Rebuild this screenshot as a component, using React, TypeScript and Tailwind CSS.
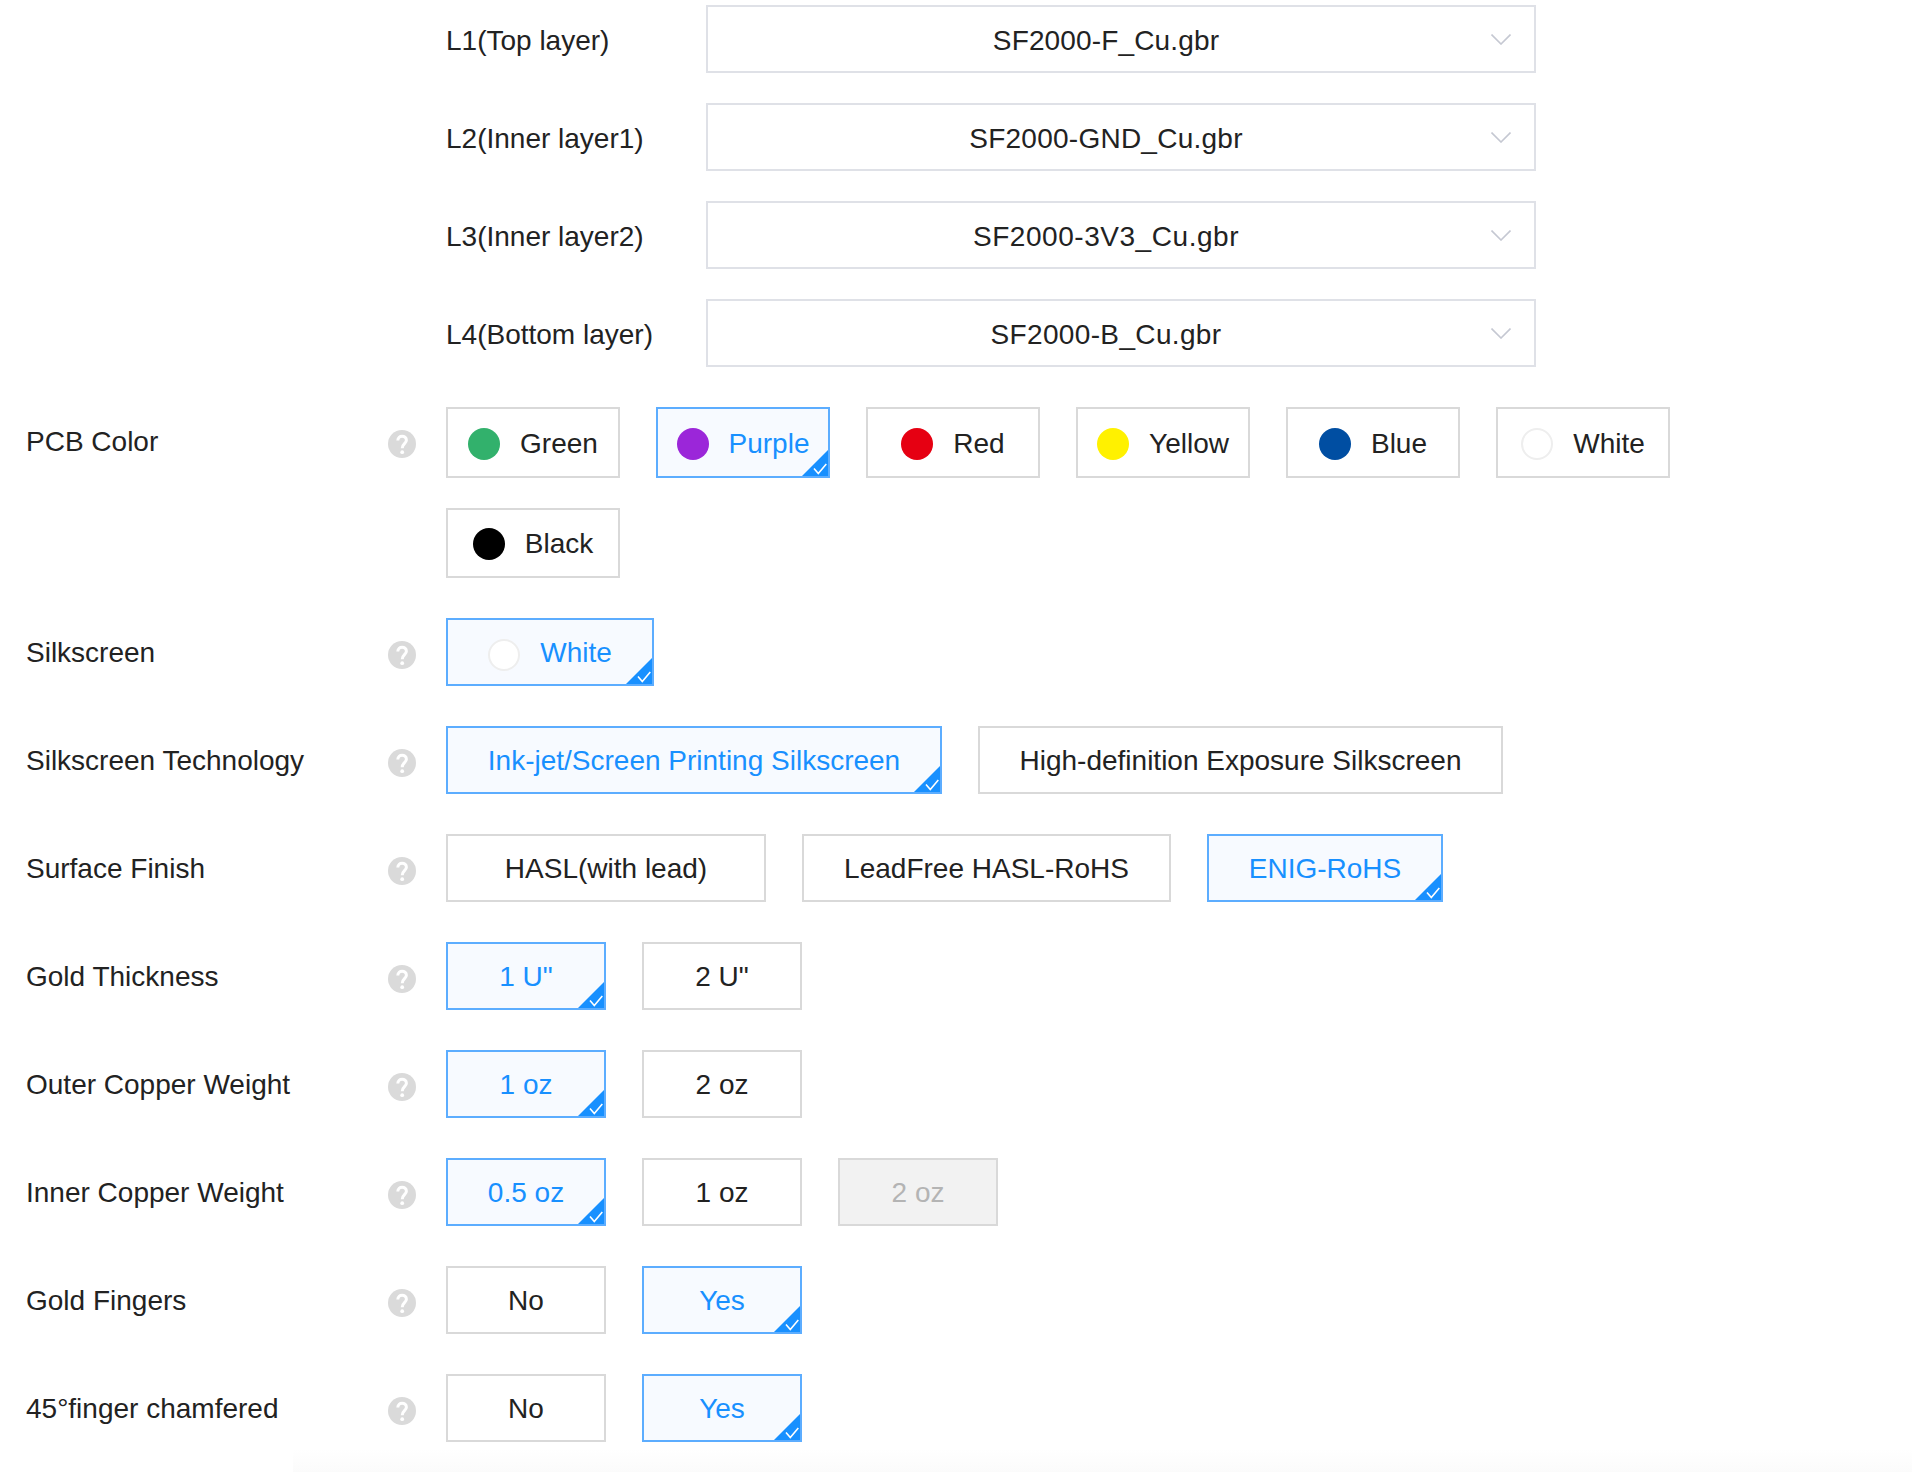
import React from "react";

const F = "font-['Liberation_Sans',Arial,sans-serif]";

function Help() {
  return (
    <svg width="28" height="28" viewBox="0 0 28 28" className="mt-[23px] shrink-0">
      <circle cx="14" cy="14" r="14" fill="#dadada" />
      <path d="M9.8 10.6 C9.8 4.6 18.4 5 18.4 10.2 C18.4 13.6 14.2 13.8 14.2 18.2" fill="none" stroke="#fff" strokeWidth="3" />
      <circle cx="14.2" cy="22.2" r="1.9" fill="#fff" />
    </svg>
  );
}

function Tick() {
  return (
    <svg width="26" height="26" viewBox="0 0 26 26" className="absolute right-0 bottom-0">
      <path d="M26 0 V26 H0 Z" fill="#1890ff" />
      <path d="M12 18.5 L16.3 23.6 L24.3 14" fill="none" stroke="#fff" strokeWidth="1.6" />
    </svg>
  );
}

function Dot({ color, ring, lift }: { color: string; ring?: boolean; lift?: boolean }) {
  return (
    <span
      className={`h-8 w-8 shrink-0 rounded-full ${ring ? "border-2 border-[#eeeeee]" : ""} ${lift ? "translate-y-[2px]" : ""}`}
      style={{ backgroundColor: color }}
    />
  );
}

type BtnProps = {
  w: string;
  h?: string;
  on?: boolean;
  off?: boolean;
  children: React.ReactNode;
};

function Btn({ w, h = "h-[68px]", on, off, children }: BtnProps) {
  const tone = on
    ? "border-[#5cadff] bg-[#f7faff] text-[#1890ff]"
    : off
      ? "border-[#d9d9d9] bg-[#f2f2f2] text-[#b4b4b4]"
      : "border-[#d9d9d9] bg-white text-[#222222]";
  return (
    <div className={`relative flex items-center justify-center border-2 pt-[1px] ${w} ${h} ${tone}`}>
      {children}
      {on ? <Tick /> : null}
    </div>
  );
}

function Row({ label, children }: { label: string; children: React.ReactNode }) {
  return (
    <div className="flex items-start">
      <div className="flex h-[68px] w-[362px] shrink-0 items-center pt-[2px]">{label}</div>
      <Help />
      <div className="ml-[30px] flex flex-1 flex-wrap gap-x-9 gap-y-[30px]">{children}</div>
    </div>
  );
}

function Layer({ label, file, track }: { label: string; file: string; track: string }) {
  return (
    <div className="flex items-center">
      <div className="w-[260px] shrink-0 pt-[3px]">{label}</div>
      <div className={`relative flex h-[68px] w-[830px] items-center justify-center border-2 border-[#dfe1e7] pr-[30px] pt-[3px] ${track}`}>
        {file}
        <svg width="20" height="11" viewBox="0 0 20 11" className="absolute right-[23px] top-[27px]">
          <path d="M0.5 0.5 L10 10 L19.5 0.5" fill="none" stroke="#c5c8d2" strokeWidth="1.6" />
        </svg>
      </div>
    </div>
  );
}

const colors: [string, string][] = [
  ["Green", "#32b16c"],
  ["Purple", "#9b26d9"],
  ["Red", "#e60012"],
  ["Yellow", "#fff100"],
  ["Blue", "#004ea2"],
  ["White", "#ffffff"],
  ["Black", "#000000"],
];

export default function App() {
  return (
    <div className={`${F} min-h-[1472px] w-[1912px] bg-white pl-[26px] pt-[5px] text-[28px] leading-none text-[#222222]`}>
      <div className="flex flex-col gap-[30px] pl-[420px]">
        <Layer label="L1(Top layer)" file="SF2000-F_Cu.gbr" track="tracking-[0.15px]" />
        <Layer label="L2(Inner layer1)" file="SF2000-GND_Cu.gbr" track="tracking-[0.25px]" />
        <Layer label="L3(Inner layer2)" file="SF2000-3V3_Cu.gbr" track="tracking-[0.55px]" />
        <Layer label="L4(Bottom layer)" file="SF2000-B_Cu.gbr" track="tracking-[0.35px]" />
      </div>

      <div className="mt-10 w-[1750px]">
        <Row label="PCB Color">
          {colors.map(([name, c]) => (
            <Btn key={name} w="w-[174px]" h={name === "Black" ? "h-[70px]" : "h-[71px]"} on={name === "Purple"}>
              <span className="flex items-center gap-5 pt-[1px]">
                <Dot color={c} ring={name === "White"} />
                {name}
              </span>
            </Btn>
          ))}
        </Row>
      </div>

      <div className="mt-10 flex flex-col gap-10">
        <Row label="Silkscreen">
          <Btn w="w-[208px]" on>
            <span className="flex items-center gap-5">
              <Dot color="#ffffff" ring lift />
              White
            </span>
          </Btn>
        </Row>
        <Row label="Silkscreen Technology">
          <Btn w="w-[496px]" on>Ink-jet/Screen Printing Silkscreen</Btn>
          <Btn w="w-[525px]">High-definition Exposure Silkscreen</Btn>
        </Row>
        <Row label="Surface Finish">
          <Btn w="w-[320px]">HASL(with lead)</Btn>
          <Btn w="w-[369px]">LeadFree HASL-RoHS</Btn>
          <Btn w="w-[236px]" on>ENIG-RoHS</Btn>
        </Row>
        <Row label="Gold Thickness">
          <Btn w="w-40" on>1 U"</Btn>
          <Btn w="w-40">2 U"</Btn>
        </Row>
        <Row label="Outer Copper Weight">
          <Btn w="w-40" on>1 oz</Btn>
          <Btn w="w-40">2 oz</Btn>
        </Row>
        <Row label="Inner Copper Weight">
          <Btn w="w-40" on>0.5 oz</Btn>
          <Btn w="w-40">1 oz</Btn>
          <Btn w="w-40" off>2 oz</Btn>
        </Row>
        <Row label="Gold Fingers">
          <Btn w="w-40">No</Btn>
          <Btn w="w-40" on>Yes</Btn>
        </Row>
        <Row label="45°finger chamfered">
          <Btn w="w-40">No</Btn>
          <Btn w="w-40" on>Yes</Btn>
        </Row>
      </div>

      <div className="ml-[267px] mt-[7px] h-[23px] bg-gradient-to-b from-white to-[#fbfbfb]" />
    </div>
  );
}
